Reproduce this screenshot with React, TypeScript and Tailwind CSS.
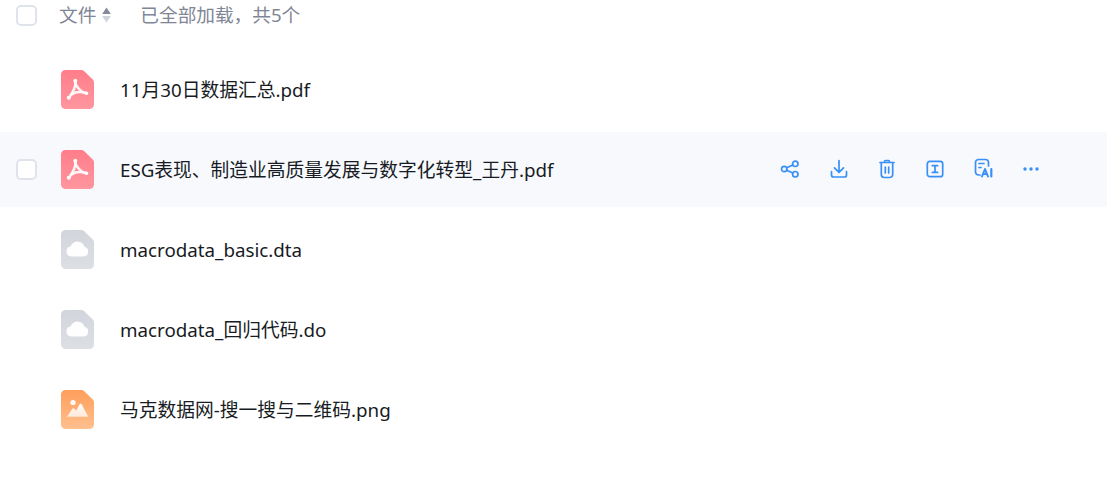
const font = "font-['Noto_Sans','Noto_Sans_CJK_SC',sans-serif]";

function FileShape({ id, from, to, children }: { id: string; from: string; to: string; children: React.ReactNode }) {
  return (
    <svg width="33" height="39" viewBox="0 0 33 39" className="shrink-0">
      <defs>
        <linearGradient id={id} x1="0" y1="0" x2="0" y2="1">
          <stop offset="0" stopColor={from} />
          <stop offset="1" stopColor={to} />
        </linearGradient>
        <linearGradient id={`${id}-w`} x1="0" y1="0" x2="0" y2="1">
          <stop offset="0" stopColor="#fff" stopOpacity="1" />
          <stop offset="1" stopColor="#fff" stopOpacity="0.7" />
        </linearGradient>
      </defs>
      <path d="M4.500 0H20.500C21.500 0 22.300.3 23 1L32 9.800C32.700 10.500 33 11.300 33 12.300V34.500A4.500 4.500 0 0 1 28.500 39H4.500A4.500 4.500 0 0 1 0 34.500V4.500A4.500 4.500 0 0 1 4.500 0Z" fill={`url(#${id})`} />
      {children}
    </svg>
  );
}

function PdfIcon({ id }: { id: string }) {
  return (
    <FileShape id={id} from="#ff7d8a" to="#ff969f">
      <g fill="none" stroke="#fff" strokeOpacity="0.9" strokeWidth="2.600" strokeLinecap="round" strokeLinejoin="round">
        <path d="M14 11C14 14.500 16.500 18 20.500 21.200C22 22.300 24 23 25.500 23.300" />
        <path d="M14.500 11.500C15 16 12 23 7.800 27.800" />
        <path d="M10.500 24.300C14 22.300 20 21.300 25.500 23.300" />
      </g>
      <circle cx="14.300" cy="10.800" r="2" fill="#fff" fillOpacity="0.92" />
      <circle cx="7.800" cy="27.800" r="2" fill="#fff" fillOpacity="0.92" />
      <circle cx="25.500" cy="23.300" r="1.800" fill="#fff" fillOpacity="0.92" />
    </FileShape>
  );
}

function CloudIcon({ id }: { id: string }) {
  return (
    <FileShape id={id} from="#d2d5db" to="#dcdfe4">
      <path
        d="M10 26.500A5 5 0 0 1 9.500 16.600C10.500 13.600 13.300 11.600 16.500 11.600C19.800 11.600 22.500 13.700 23.500 16.700A5 5 0 0 1 22.700 26.500Z"
        fill="#fff"
        fillOpacity="0.96"
      />
    </FileShape>
  );
}

function ImageIcon({ id }: { id: string }) {
  return (
    <FileShape id={id} from="#ff9e5b" to="#ffc08e">
      <circle cx="12" cy="12.500" r="2.600" fill="#fff" fillOpacity="0.97" />
      <path d="M5.800 26.700L11.700 18.500C12.100 18 12.600 18 13 18.500L15 20.800L18.800 14C19.300 13.300 20 13.300 20.500 14L27.300 26.700Z" fill={`url(#${id}-w)`} />
    </FileShape>
  );
}

function ActionIcons() {
  const c = "#3a90f6";
  const p = { fill: "none", stroke: c, strokeWidth: 1.7, strokeLinecap: "round" as const, strokeLinejoin: "round" as const };
  return (
    <div className="mb-[2px] ml-auto mr-[64px] flex items-center gap-[24px]">
      <svg width="24" height="24" viewBox="0 0 24 24" className="mr-[1px]" {...p}>
        <circle cx="6.200" cy="12" r="2.700" />
        <circle cx="17.300" cy="6.800" r="2.700" />
        <circle cx="17.300" cy="17.200" r="2.700" />
        <path d="M8.700 10.800L14.800 8M8.700 13.200L14.800 16" />
      </svg>
      <svg width="24" height="24" viewBox="0 0 24 24" {...p}>
        <path d="M12 3.500V15M7.500 10.800L12 15.300L16.500 10.800" />
        <path d="M4.500 14.500V18a2 2 0 0 0 2 2H17.500a2 2 0 0 0 2-2V14.500" />
      </svg>
      <svg width="24" height="24" viewBox="0 0 24 24" {...p}>
        <path d="M5 5.500H19M9.500 5.500V4.500a1 1 0 0 1 1-1H13.500a1 1 0 0 1 1 1V5.500" />
        <path d="M6.300 5.500V17.500a3 3 0 0 0 3 3H14.700a3 3 0 0 0 3-3V5.500" />
        <path d="M10.300 10V16M13.700 10V16" />
      </svg>
      <svg width="24" height="24" viewBox="0 0 24 24" {...p}>
        <rect x="4.300" y="4.300" width="15.400" height="15.400" rx="2.500" />
        <path d="M9.300 8.700H14.700M9.300 15.300H14.700M12 8.700V15.300" />
      </svg>
      <svg width="24" height="24" viewBox="0 0 24 24" {...p}>
        <path d="M9 18H7.500a3 3 0 0 1-3-3V5.500a3 3 0 0 1 3-3H14.500a3 3 0 0 1 3 3V9" />
        <path d="M8 6.500H13M8 10.500H10" />
        <path d="M11 19.500L14 12L17 19.500M12.200 17H15.800" strokeWidth="2" />
        <path d="M20.300 12V19.500" strokeWidth="2.200" />
      </svg>
      <svg width="24" height="24" viewBox="0 0 24 24" fill={c}>
        <circle cx="6" cy="12" r="1.700" />
        <circle cx="12" cy="12" r="1.700" />
        <circle cx="18" cy="12" r="1.700" />
      </svg>
    </div>
  );
}

function Checkbox() {
  return <div className="h-[21px] w-[21px] shrink-0 rounded-[5px] border-2 border-[#dfe3eb] bg-white" />;
}

function Row({ icon, name, active }: { icon: React.ReactNode; name: string; active?: boolean }) {
  return (
    <div className={`flex h-[75px] items-center pl-4 ${active ? "bg-[#f7f9fd]" : ""}`}>
      <div className="w-[21px] shrink-0">{active && <Checkbox />}</div>
      <div className="ml-6">{icon}</div>
      <div className="ml-[26px] text-[18.75px] leading-[26px] text-[#171b24]">{name}</div>
      {active && <ActionIcons />}
    </div>
  );
}

export default function App() {
  return (
    <div className={`h-[485px] w-[1107px] overflow-hidden bg-white ${font}`}>
      <div className="flex h-[29px] items-center pl-4 pt-px text-[18.67px] text-[#7f8696]">
        <Checkbox />
        <span className="ml-[22px]">文件</span>
        <svg width="9" height="16" viewBox="0 0 9 16" className="ml-[6px]">
          <path d="M4.500 .5L8.800 7H.2Z" fill="#858b9a" />
          <path d="M4.500 15.500L8.800 9H.2Z" fill="#ced3dc" />
        </svg>
        <span className="ml-[29px]">已全部加载，共5个</span>
      </div>
      <div className="mt-[23px] flex flex-col gap-[5px]">
        <Row icon={<PdfIcon id="a" />} name="11月30日数据汇总.pdf" />
        <Row icon={<PdfIcon id="b" />} name="ESG表现、制造业高质量发展与数字化转型_王丹.pdf" active />
        <Row icon={<CloudIcon id="c" />} name="macrodata_basic.dta" />
        <Row icon={<CloudIcon id="d" />} name="macrodata_回归代码.do" />
        <Row icon={<ImageIcon id="e" />} name="马克数据网-搜一搜与二维码.png" />
      </div>
    </div>
  );
}
